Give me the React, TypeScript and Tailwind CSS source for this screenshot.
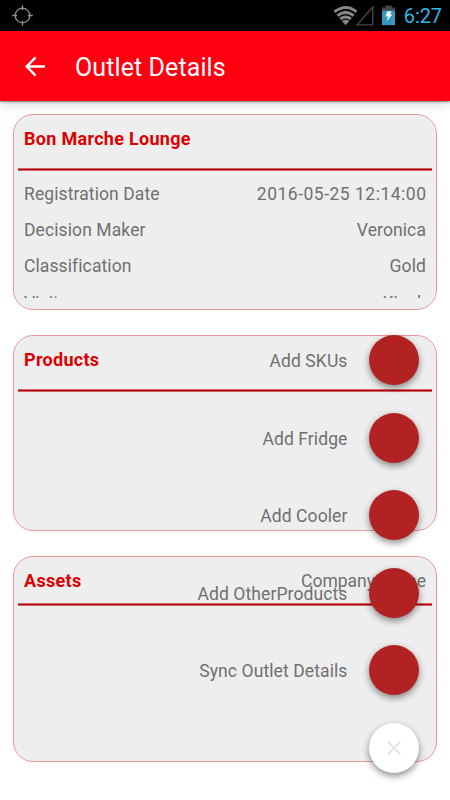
import React from 'react';

interface Detail {
  label: string;
  value: string;
  valueClass?: string;
}

const details: Detail[] = [
  { label: 'Registration Date', value: '2016-05-25 12:14:00', valueClass: 'tracking-[0.5px] -mr-[0.5px]' },
  { label: 'Decision Maker', value: 'Veronica' },
  { label: 'Classification', value: 'Gold' },
  { label: 'Visit', value: 'Kiosk' },
];

const actions = ['Add SKUs', 'Add Fridge', 'Add Cooler', 'Add OtherProducts', 'Sync Outlet Details'];

const StatusBar: React.FC = () => (
  <div className="flex h-[31px] shrink-0 items-center bg-black pl-[11px] pr-2">
    <svg width="23" height="23" viewBox="0 0 23 23" fill="none" stroke="#8f8f8f" strokeWidth="1.3">
      <circle cx="11.5" cy="11.5" r="7.3" />
      <path d="M11.5 1.2v5M11.5 16.8v5M1.2 11.5h5M16.8 11.5h5" />
    </svg>
    <svg className="ml-auto" width="26" height="21" viewBox="0 0 26 21" fill="none" stroke="#858585" strokeWidth="3">
      <path d="M3.4 6.8Q15 -1.9 25.6 6.8" />
      <path d="M6.4 10.6Q14.6 4.1 22.8 10.6" />
      <path d="M9.2 14Q14.6 9.9 20 14" />
      <path d="M10.8 16Q14.6 13.4 18.4 16L14.6 20.2z" fill="#858585" stroke="none" />
    </svg>
    <svg className="-ml-[3px] mr-0.5" width="20" height="21" viewBox="0 0 20 21" fill="none" stroke="#4a4a4a" strokeWidth="1.3">
      <path d="M18.8 2v17.8H3z" />
    </svg>
    <svg className="ml-1" width="17" height="21" viewBox="0 0 17 21">
      <path d="M5.4 .6h6.4v2h3.2v3H2v-3h3.4z" fill="#454545" />
      <path d="M2 5.4h13v14.8H2z" fill="#3499bd" />
      <path d="M7.4 6.3h4.2L10 9.5h2.4L6.3 16.4l1.9-5H5.4z" fill="#f4fafc" />
    </svg>
    <span className="ml-[7px] mt-px text-[20px] leading-none tracking-[-0.1px] text-[#33b5e5]">6:27</span>
  </div>
);

const Toolbar: React.FC = () => (
  <header className="relative flex h-[70px] shrink-0 items-center bg-[#ff0011] pl-[25px] shadow-[0_1px_2px_rgba(0,0,0,0.45),0_4px_10px_rgba(0,0,0,0.14)]">
    <svg width="21" height="21" viewBox="0 0 21 21" fill="none" stroke="#fff" strokeWidth="2.4">
      <path d="M20 10.5H2M10.6 1.4L1.7 10.5l8.9 9.1" />
    </svg>
    <h1 className="ml-[29px] mt-[3px] text-[25px] leading-none tracking-[0.1px] text-white">Outlet Details</h1>
  </header>
);

interface CardProps {
  title: string;
  className: string;
  headerClass: string;
  side?: string;
  children?: React.ReactNode;
}

const Card: React.FC<CardProps> = ({ title, className, headerClass, side, children }) => (
  <section className={`flex shrink-0 flex-col rounded-[20px] border border-[#ea999e] bg-[#eeeeee] px-1 ${className}`}>
    <div className={`flex shrink-0 justify-between px-1.5 pt-[13px] ${headerClass}`}>
      <h2 className="text-[18px] font-bold leading-[22px] tracking-[0.3px] text-[#dc0000]">{title}</h2>
      {side && <span className="leading-[22px] tracking-normal">{side}</span>}
    </div>
    <div className="h-[3px] shrink-0 border-y border-[#d0666a] bg-[#b80008]" />
    {children}
  </section>
);

const SpeedDial: React.FC = () => (
  <div className="absolute right-[31px] top-[335px] flex flex-col items-end gap-[27.5px]">
    {actions.map((label) => (
      <div key={label} className="flex items-center">
        <span className="mr-[21.5px] mt-0.5 leading-[22px]">{label}</span>
        <button aria-label={label} className="size-[50px] rounded-full bg-[#b22222] shadow-[0_3px_7px_rgba(0,0,0,0.45)]" />
      </div>
    ))}
    <button
      aria-label="Close"
      className="flex size-[50px] items-center justify-center rounded-full bg-white shadow-[0_3px_7px_rgba(0,0,0,0.45)]"
    >
      <svg width="14" height="14" viewBox="0 0 14 14" stroke="#e6e6e6" strokeWidth="2">
        <path d="M1 1l12 12M13 1L1 13" />
      </svg>
    </button>
  </div>
);

const App: React.FC = () => {
  return (
    <div className="relative flex h-[800px] w-[450px] flex-col overflow-hidden bg-white font-[Roboto,sans-serif] text-[17.5px] tracking-[0.1px] text-[#707070]">
      <div className="flex shrink-0 flex-col tracking-normal">
        <StatusBar />
        <Toolbar />
      </div>

      <main className="flex flex-col px-[13px] pt-[13px]">
        <Card title="Bon Marche Lounge" className="h-[196px]" headerClass="h-[53px]">
          <div className="h-[127px] overflow-hidden px-1.5 pt-[5px]">
            {details.map((item) => (
              <div key={item.label} className="flex h-[36.2px] items-center justify-between">
                <span>{item.label}</span>
                <span className={item.valueClass}>{item.value}</span>
              </div>
            ))}
          </div>
        </Card>
        <Card title="Products" className="mt-[25px] h-[196px]" headerClass="h-[53px]" />
        <Card title="Assets" className="mt-[25px] h-[206px]" headerClass="h-[46px]" side="Company Name" />
      </main>

      <SpeedDial />
    </div>
  );
};

export default App;
